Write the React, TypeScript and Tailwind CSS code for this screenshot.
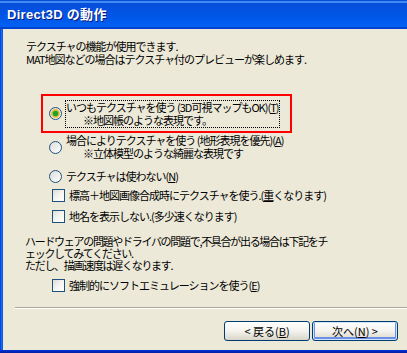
import React from "react";

const jp = { fontFamily: '"Noto Sans CJK JP", "Noto Sans", sans-serif' };

function Radio({ checked, hot }: { checked?: boolean; hot?: boolean }) {
  return (
    <span className="relative inline-flex h-[13px] w-[13px] shrink-0 items-center justify-center rounded-full border border-[#1c5180] bg-gradient-to-br from-[#dcdcd7] to-white">
      {hot && (
        <span className="absolute inset-[1px] rounded-full border-2 border-[#f5b83d]" />
      )}
      {checked && (
        <span className="relative h-[5px] w-[5px] rounded-full bg-[#21a121] shadow-[0_0_0_0.5px_#4cbf4c]" />
      )}
    </span>
  );
}

function Check() {
  return (
    <span className="inline-block h-[13px] w-[13px] shrink-0 border border-[#1c5180] bg-gradient-to-br from-[#dcdcd7] via-[#f4f4f0] to-white" />
  );
}

export default function App() {
  return (
    <div
      className="flex h-[353px] w-[407px] flex-col overflow-hidden bg-[#ece9d8] text-[11px] text-black"
      style={jp}
    >
      {/* title bar */}
      <div className="flex h-[29px] shrink-0 items-center bg-gradient-to-b from-[#0a4cd8] via-[#0055e5] to-[#0063f7] pl-[7px] border-t border-t-[#0a4cd8] shadow-[inset_0_1px_0_#3d8df5,inset_0_2px_0_#3d8df5,inset_0_-2px_0_#0043cf]">
        <span
          className="text-[13px] font-bold tracking-[0.3px] text-white [text-shadow:1px_1px_0_#0a1a7a]"
          style={{ fontFamily: '"Liberation Sans", "Noto Sans CJK JP", sans-serif' }}
        >
          Direct3D の動作
        </span>
      </div>

      <div className="flex min-h-0 flex-1">
        {/* left frame */}
        <div className="w-[3px] shrink-0 bg-gradient-to-r from-[#0831d9] via-[#166aee] to-[#0855dd]" />

        {/* client area */}
        <div className="flex flex-1 flex-col tracking-[-1px]">
          <div className="pl-[23px] pt-[11px] leading-[13px]">
            <div>テクスチャの機能が使用できます.</div>
            <div>MAT地図などの場合はテクスチャ付のプレビューが楽しめます.</div>
          </div>

          {/* selected option in red frame */}
          <div className="ml-[38px] mt-[28px] flex h-[39px] w-[251px] items-center border-2 border-[#ff0000] pl-[6px]">
            <Radio checked hot />
            <div className="ml-[3px] border border-dotted border-black pr-[1px] leading-[13px]">
              <div>
                いつもテクスチャを使う (3D可視マップもOK)(<u>T</u>)
              </div>
              <div className="pl-[17px]">※地図帳のような表現です。</div>
            </div>
          </div>

          <div className="ml-[46px] flex items-center">
            <Radio />
            <div className="ml-[3px] border border-transparent leading-[13px]">
              <div>
                場合によりテクスチャを使う (地形表現を優先)(<u>A</u>)
              </div>
              <div className="pl-[17px]">※立体模型のような綺麗な表現です</div>
            </div>
          </div>

          <div className="ml-[46px] mt-[8px] flex items-center">
            <Radio />
            <div className="ml-[3px] border border-transparent leading-[13px]">
              テクスチャは使わない(<u>N</u>)
            </div>
          </div>

          <div className="ml-[49px] mt-[5px] flex items-center leading-[13px]">
            <Check />
            <span className="ml-[4px]">
              標高＋地図画像合成時にテクスチャを使う.(<u>重</u>くなります)
            </span>
          </div>

          <div className="ml-[49px] mt-[8px] flex items-center leading-[13px]">
            <Check />
            <span className="ml-[4px]">地名を表示しない.(多少速くなります)</span>
          </div>

          <div className="ml-[22px] mt-[12px] leading-[12px] tracking-[-1.3px]">
            <div>ハードウェアの問題やドライバの問題で,不具合が出る場合は下記をチ</div>
            <div>ェックしてみてください.</div>
            <div>ただし、描画速度は遅くなります.</div>
          </div>

          <div className="ml-[49px] mt-[8px] flex items-center leading-[13px]">
            <Check />
            <span className="ml-[4px]">強制的にソフトエミュレーションを使う(<u>E</u>)</span>
          </div>

          {/* separator */}
          <div className="ml-[12px] mt-[15px] h-[2px] border-t border-b border-t-[#aca899] border-b-white" />

          {/* buttons */}
          <div className="mt-[12px] flex gap-[2px] pl-[221px] tracking-normal">
            <button className="flex h-[20px] w-[86px] items-center justify-center rounded-[3px] border border-[#003c74] bg-gradient-to-b from-white via-[#f4f3ee] to-[#d9d5c8] text-[11px] leading-none">
              &lt; 戻る(<u>B</u>)
            </button>
            <button className="flex h-[20px] w-[86px] items-center justify-center rounded-[3px] border border-[#003c74] bg-gradient-to-b from-white via-[#f4f3ee] to-[#d9d5c8] text-[11px] leading-none shadow-[inset_0_0_0_1px_#cee7ff,inset_0_-1px_0_2px_#6d8fe8]">
              次へ(<u>N</u>) &gt;
            </button>
          </div>
        </div>
      </div>

      {/* bottom frame */}
      <div className="h-[3px] shrink-0 bg-gradient-to-b from-[#0831d9] to-[#001ea0]" />
    </div>
  );
}
